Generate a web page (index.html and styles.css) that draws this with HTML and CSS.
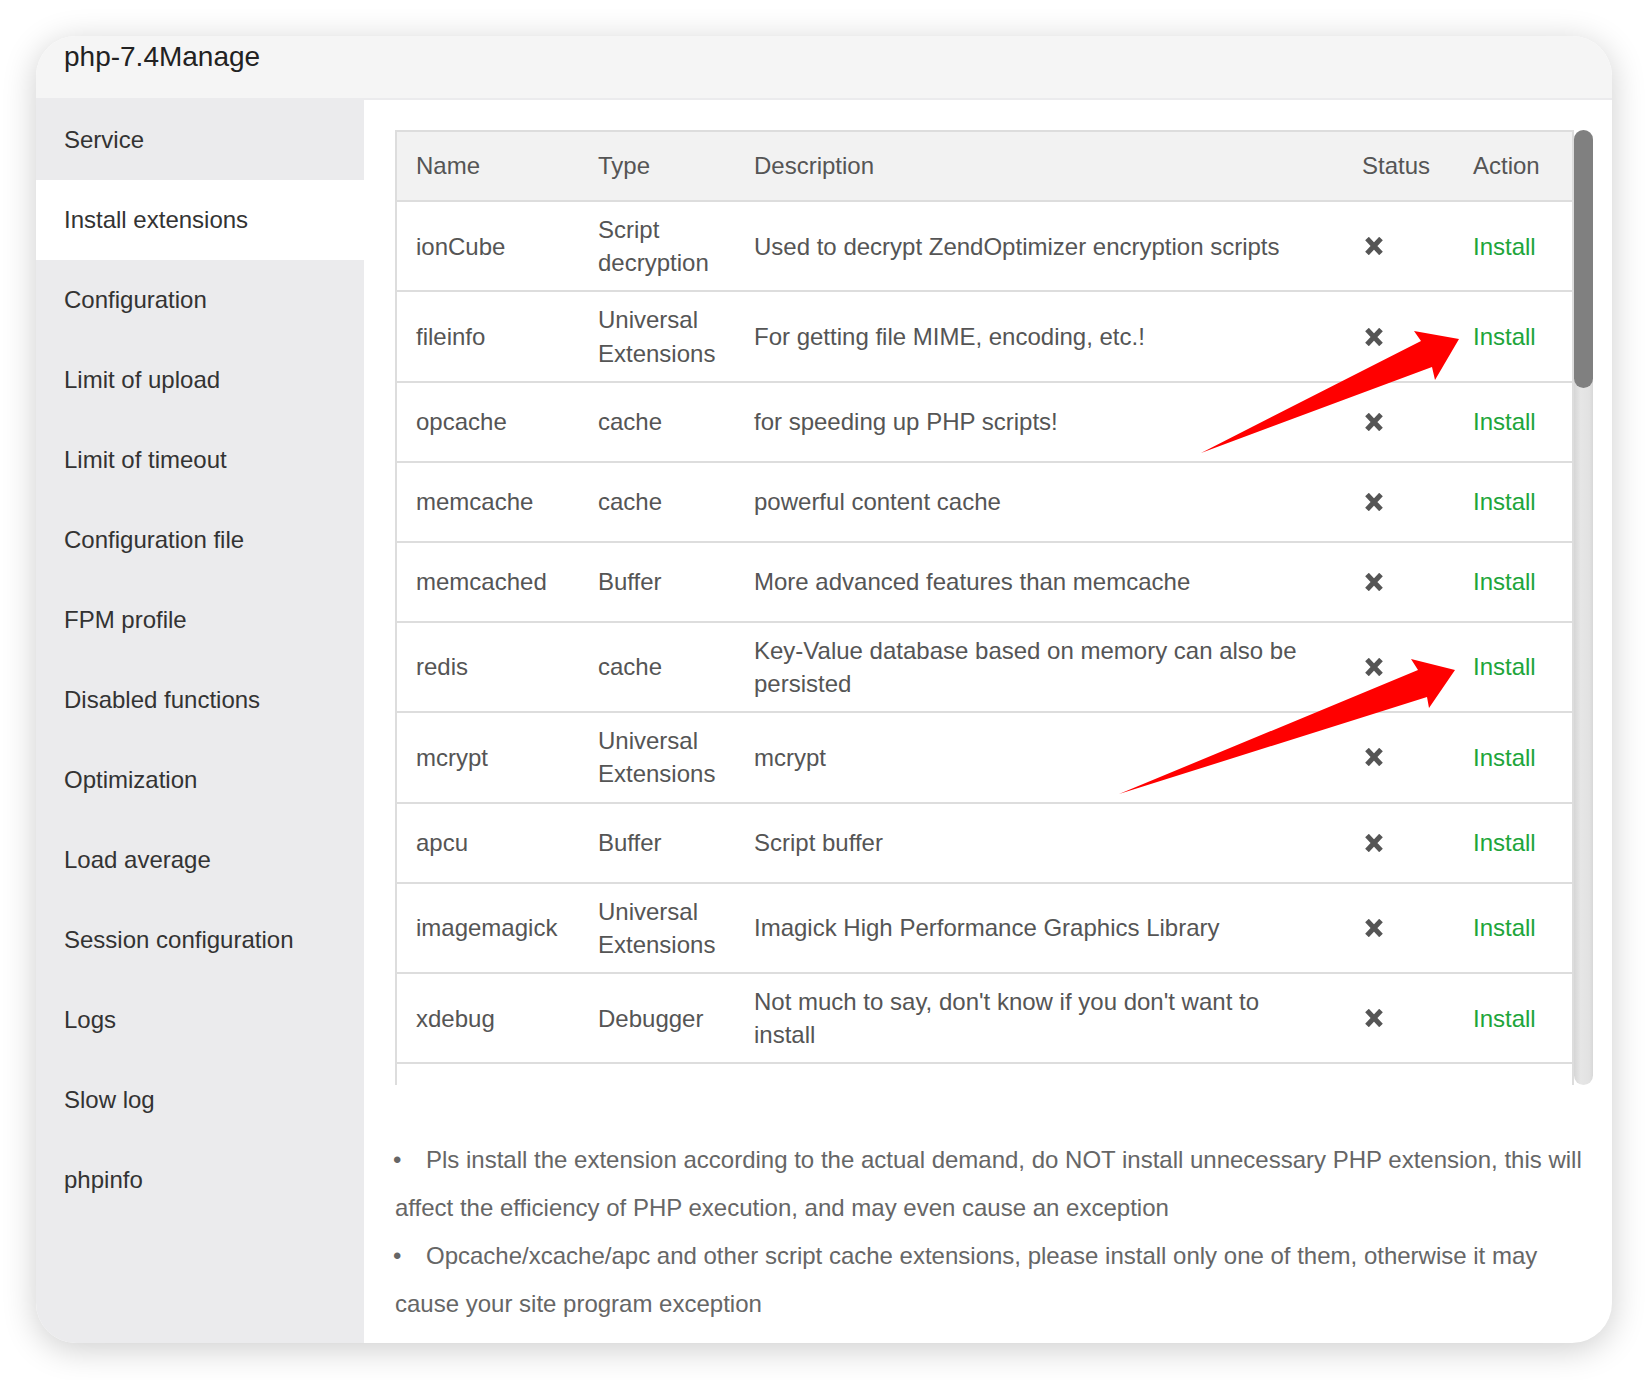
FILE: index.html
```html
<!DOCTYPE html>
<html lang="en">
<head>
<meta charset="utf-8">
<title>php-7.4Manage</title>
<link rel="stylesheet" href="styles.css">
</head>
<body>
<div class="window">
  <div class="titlebar">php-7.4Manage</div>
  <div class="panel">
    <ul class="sidebar">
      <li class="nav-item">Service</li>
      <li class="nav-item active">Install extensions</li>
      <li class="nav-item">Configuration</li>
      <li class="nav-item">Limit of upload</li>
      <li class="nav-item">Limit of timeout</li>
      <li class="nav-item">Configuration file</li>
      <li class="nav-item">FPM profile</li>
      <li class="nav-item">Disabled functions</li>
      <li class="nav-item">Optimization</li>
      <li class="nav-item">Load average</li>
      <li class="nav-item">Session configuration</li>
      <li class="nav-item">Logs</li>
      <li class="nav-item">Slow log</li>
      <li class="nav-item">phpinfo</li>
    </ul>
    <div class="content">
      <div class="scroll-area">
        <div class="ext-table">
          <div class="row head">
            <div class="cell c-name">Name</div>
            <div class="cell c-type">Type</div>
            <div class="cell c-desc">Description</div>
            <div class="cell c-status">Status</div>
            <div class="cell c-action">Action</div>
          </div>
          <div class="row">
            <div class="cell c-name">ionCube</div>
            <div class="cell c-type">Script decryption</div>
            <div class="cell c-desc">Used to decrypt ZendOptimizer encryption scripts</div>
            <div class="cell c-status"><svg class="x-icon" viewBox="0 0 20 18"><path d="M3 1.5 L17 16.5 M17 1.5 L3 16.5"/></svg></div>
            <div class="cell c-action"><span class="install">Install</span></div>
          </div>
          <div class="row">
            <div class="cell c-name">fileinfo</div>
            <div class="cell c-type">Universal Extensions</div>
            <div class="cell c-desc">For getting file MIME, encoding, etc.!</div>
            <div class="cell c-status"><svg class="x-icon" viewBox="0 0 20 18"><path d="M3 1.5 L17 16.5 M17 1.5 L3 16.5"/></svg></div>
            <div class="cell c-action"><span class="install">Install</span></div>
          </div>
          <div class="row">
            <div class="cell c-name">opcache</div>
            <div class="cell c-type">cache</div>
            <div class="cell c-desc">for speeding up PHP scripts!</div>
            <div class="cell c-status"><svg class="x-icon" viewBox="0 0 20 18"><path d="M3 1.5 L17 16.5 M17 1.5 L3 16.5"/></svg></div>
            <div class="cell c-action"><span class="install">Install</span></div>
          </div>
          <div class="row">
            <div class="cell c-name">memcache</div>
            <div class="cell c-type">cache</div>
            <div class="cell c-desc">powerful content cache</div>
            <div class="cell c-status"><svg class="x-icon" viewBox="0 0 20 18"><path d="M3 1.5 L17 16.5 M17 1.5 L3 16.5"/></svg></div>
            <div class="cell c-action"><span class="install">Install</span></div>
          </div>
          <div class="row">
            <div class="cell c-name">memcached</div>
            <div class="cell c-type">Buffer</div>
            <div class="cell c-desc">More advanced features than memcache</div>
            <div class="cell c-status"><svg class="x-icon" viewBox="0 0 20 18"><path d="M3 1.5 L17 16.5 M17 1.5 L3 16.5"/></svg></div>
            <div class="cell c-action"><span class="install">Install</span></div>
          </div>
          <div class="row">
            <div class="cell c-name">redis</div>
            <div class="cell c-type">cache</div>
            <div class="cell c-desc">Key-Value database based on memory can also be persisted</div>
            <div class="cell c-status"><svg class="x-icon" viewBox="0 0 20 18"><path d="M3 1.5 L17 16.5 M17 1.5 L3 16.5"/></svg></div>
            <div class="cell c-action"><span class="install">Install</span></div>
          </div>
          <div class="row">
            <div class="cell c-name">mcrypt</div>
            <div class="cell c-type">Universal Extensions</div>
            <div class="cell c-desc">mcrypt</div>
            <div class="cell c-status"><svg class="x-icon" viewBox="0 0 20 18"><path d="M3 1.5 L17 16.5 M17 1.5 L3 16.5"/></svg></div>
            <div class="cell c-action"><span class="install">Install</span></div>
          </div>
          <div class="row">
            <div class="cell c-name">apcu</div>
            <div class="cell c-type">Buffer</div>
            <div class="cell c-desc">Script buffer</div>
            <div class="cell c-status"><svg class="x-icon" viewBox="0 0 20 18"><path d="M3 1.5 L17 16.5 M17 1.5 L3 16.5"/></svg></div>
            <div class="cell c-action"><span class="install">Install</span></div>
          </div>
          <div class="row">
            <div class="cell c-name">imagemagick</div>
            <div class="cell c-type">Universal Extensions</div>
            <div class="cell c-desc">Imagick High Performance Graphics Library</div>
            <div class="cell c-status"><svg class="x-icon" viewBox="0 0 20 18"><path d="M3 1.5 L17 16.5 M17 1.5 L3 16.5"/></svg></div>
            <div class="cell c-action"><span class="install">Install</span></div>
          </div>
          <div class="row">
            <div class="cell c-name">xdebug</div>
            <div class="cell c-type">Debugger</div>
            <div class="cell c-desc">Not much to say, don't know if you don't want to install</div>
            <div class="cell c-status"><svg class="x-icon" viewBox="0 0 20 18"><path d="M3 1.5 L17 16.5 M17 1.5 L3 16.5"/></svg></div>
            <div class="cell c-action"><span class="install">Install</span></div>
          </div>
        </div>
        <div class="scrollbar"><div class="thumb"></div></div>
      </div>
      <ul class="notes">
        <li>Pls install the extension according to the actual demand, do NOT install unnecessary PHP extension, this will affect the efficiency of PHP execution, and may even cause an exception</li>
        <li>Opcache/xcache/apc and other script cache extensions, please install only one of them, otherwise it may cause your site program exception</li>
      </ul>
    </div>
  </div>
</div>
<svg class="arrows" viewBox="0 0 1648 1380" width="1648" height="1380">
  <polygon points="1201,453 1421,341 1414,331 1459,339 1435,380 1432,367"/>
  <polygon points="1119,794 1418,670 1411,659 1455,670 1429,708 1427,697"/>
</svg>
</body>
</html>
```

FILE: styles.css
```css
html, body {
  margin: 0;
  background: #ffffff;
}

body {
  position: relative;
  padding: 36px 36px 37px;
  font-family: "Liberation Sans", Arial, sans-serif;
}

.window {
  height: 1307px;
  display: flex;
  flex-direction: column;
  background: #ffffff;
  border-radius: 40px;
  overflow: hidden;
  box-shadow: 0 6px 34px rgba(0, 0, 0, 0.2);
}

.titlebar {
  flex: none;
  height: 62px;
  line-height: 42px;
  padding: 0 28px;
  font-size: 28px;
  color: #222222;
  background: #f5f5f5;
  border-bottom: 2px solid #ebebed;
}

.panel {
  flex: 1;
  display: flex;
  min-height: 0;
}

.sidebar {
  flex: none;
  width: 328px;
  margin: 0;
  padding: 0;
  list-style: none;
  background: #ebebed;
}

.nav-item {
  height: 80px;
  line-height: 80px;
  padding-left: 28px;
  font-size: 24px;
  color: #333333;
}

.nav-item.active {
  background: #ffffff;
}

.content {
  flex: 1;
  min-width: 0;
  padding: 30px 19px 0 31px;
}

.scroll-area {
  display: flex;
  height: 955px;
}

.ext-table {
  flex: none;
  width: 1179px;
  box-sizing: border-box;
  border: 2px solid #dddddd;
  border-bottom: none;
  overflow: hidden;
  font-size: 24px;
  color: #555555;
}

.row {
  display: grid;
  grid-template-columns: 182px 156px 609px 111px 117px;
  align-items: center;
  box-sizing: border-box;
  min-height: 80px;
  padding: 11px 0;
  line-height: 33.2px;
  border-bottom: 2px solid #dddddd;
}

.row.head {
  min-height: 70px;
  background: #f2f2f2;
}

.cell {
  padding: 0 18px 0 19px;
}

.c-type {
  padding-right: 10px;
}

.c-desc {
  padding-right: 30px;
}

.c-status,
.c-action {
  padding-left: 18px;
}

.x-icon {
  display: block;
  width: 20px;
  height: 18px;
  margin-left: 2px;
  fill: none;
  stroke: #555555;
  stroke-width: 5;
}

.install {
  color: #20a53a;
}

.scrollbar {
  flex: none;
  width: 19px;
  border-radius: 10px;
  background: linear-gradient(to right, #d6d6d6, #e6e6e6 35%, #e2e2e2 80%, #d8d8d8);
}

.thumb {
  height: 258px;
  border-radius: 10px;
  background: #808080;
}

.notes {
  margin: 51px 0 0;
  padding: 0;
  list-style: none;
  font-size: 24px;
  line-height: 48px;
  color: #666666;
}

.notes li::before {
  content: "\2022";
  display: inline-block;
  width: 33px;
  margin-left: -2px;
}

.arrows {
  position: absolute;
  left: 0;
  top: 0;
  pointer-events: none;
  fill: #ff0000;
}
```
